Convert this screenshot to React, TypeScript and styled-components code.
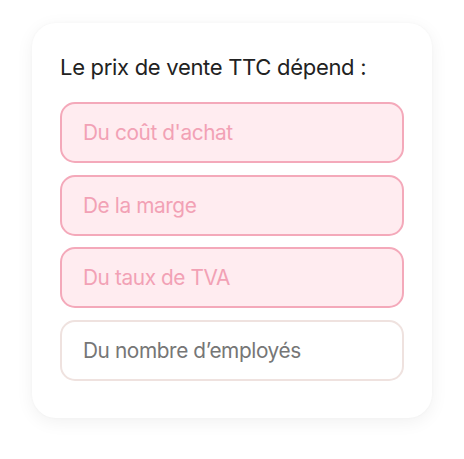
import React from "react";
import styled, { createGlobalStyle } from "styled-components";

const GlobalStyle = createGlobalStyle`
  html, body {
    margin: 0;
    padding: 0;
    background: #ffffff;
    font-family: Inter, "Noto Sans", sans-serif;
  }
`;

const Page = styled.div`
  width: 464px;
  height: 459px;
  padding: 23px 32px 0 32px;
  box-sizing: border-box;
`;

const Card = styled.div`
  width: 400px;
  height: 395px;
  box-sizing: border-box;
  background: #ffffff;
  border-radius: 24px;
  box-shadow: 0 4px 18px rgba(0, 0, 0, 0.06), 0 0 3px rgba(0, 0, 0, 0.03);
  padding: 30px 28px 0 28px;
  display: flex;
  flex-direction: column;
`;

const Title = styled.h2`
  margin: 0 0 21px 0;
  font-size: 22px;
  line-height: 28px;
  font-weight: 400;
  color: #222222;
  letter-spacing: -0.3px;
`;

const List = styled.div`
  display: flex;
  flex-direction: column;
  gap: 11.5px;
`;

const Option = styled.div<{ $selected?: boolean }>`
  height: 61px;
  box-sizing: border-box;
  border-radius: 15px;
  padding: 0 21px;
  display: flex;
  align-items: center;
  font-size: 20.8px;
  letter-spacing: -0.4px;
  border: 2px solid ${({ $selected }) => ($selected ? "#f4a9ba" : "#efe2df")};
  background: ${({ $selected }) => ($selected ? "#ffecf0" : "#ffffff")};
  color: ${({ $selected }) => ($selected ? "#f2a1b5" : "#767676")};
`;

const options = [
  { label: "Du coût d'achat", selected: true },
  { label: "De la marge", selected: true },
  { label: "Du taux de TVA", selected: true },
  { label: "Du nombre d’employés", selected: false },
];

export default function App() {
  return (
    <>
      <GlobalStyle />
      <Page>
        <Card>
          <Title>Le prix de vente TTC dépend :</Title>
          <List>
            {options.map((o) => (
              <Option key={o.label} $selected={o.selected}>
                {o.label}
              </Option>
            ))}
          </List>
        </Card>
      </Page>
    </>
  );
}
